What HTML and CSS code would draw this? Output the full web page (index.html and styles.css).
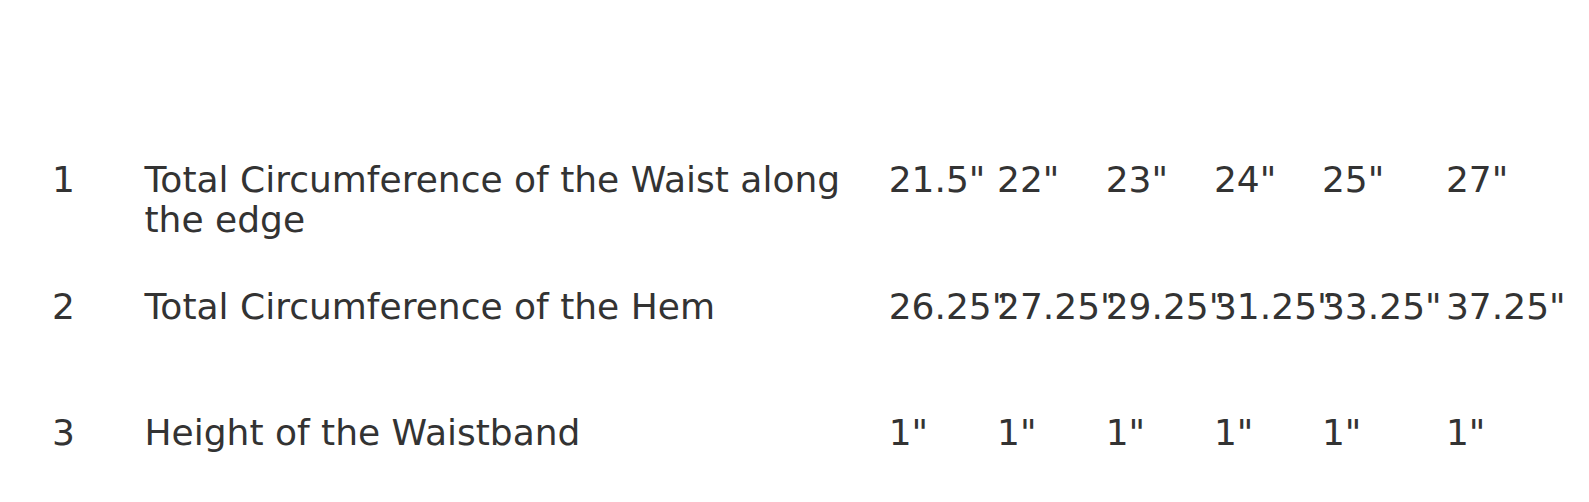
FILE: index.html
```html
<!DOCTYPE html>
<html lang="en">
<head>
<meta charset="utf-8">
<title>Size chart</title>
<link rel="stylesheet" href="styles.css">
</head>
<body>
<main class="chart">
  <table class="sizes">
    <colgroup>
      <col class="c-num">
      <col class="c-desc">
      <col class="c-v1">
      <col class="c-v2">
      <col class="c-v3">
      <col class="c-v4">
      <col class="c-v5">
      <col class="c-v6">
    </colgroup>
    <tbody>
      <tr class="tall">
        <td>1</td>
        <td>Total Circumference of the Waist along the edge</td>
        <td>21.5"</td><td>22"</td><td>23"</td><td>24"</td><td>25"</td><td>27"</td>
      </tr>
      <tr>
        <td>2</td>
        <td>Total Circumference of the Hem</td>
        <td>26.25"</td><td>27.25"</td><td>29.25"</td><td>31.25"</td><td>33.25"</td><td>37.25"</td>
      </tr>
      <tr>
        <td>3</td>
        <td>Height of the Waistband</td>
        <td>1"</td><td>1"</td><td>1"</td><td>1"</td><td>1"</td><td>1"</td>
      </tr>
    </tbody>
  </table>
</main>
</body>
</html>
```

FILE: styles.css
```css
html, body {
  margin: 0;
  padding: 0;
  background: #ffffff;
}

.chart {
  padding: 125.5px 0 0 44px;
  font-family: "DejaVu Sans", sans-serif;
  font-size: 36px;
  line-height: 40px;
  color: #333333;
}

.sizes {
  border-collapse: collapse;
  table-layout: fixed;
  width: 1545px;
}

.sizes tr {
  height: 125.5px;
}

.sizes tr.tall {
  height: 127.5px;
}

.sizes td {
  vertical-align: top;
  padding: 34px 0 0 8px;
  box-sizing: border-box;
}

.c-num { width: 92.5px; }
.c-desc { width: 744.2px; }
.c-v1 { width: 108.3px; }
.c-v2 { width: 108.7px; }
.c-v3 { width: 108.3px; }
.c-v4 { width: 108px; }
.c-v5 { width: 124px; }
.c-v6 { width: 151px; }
```
